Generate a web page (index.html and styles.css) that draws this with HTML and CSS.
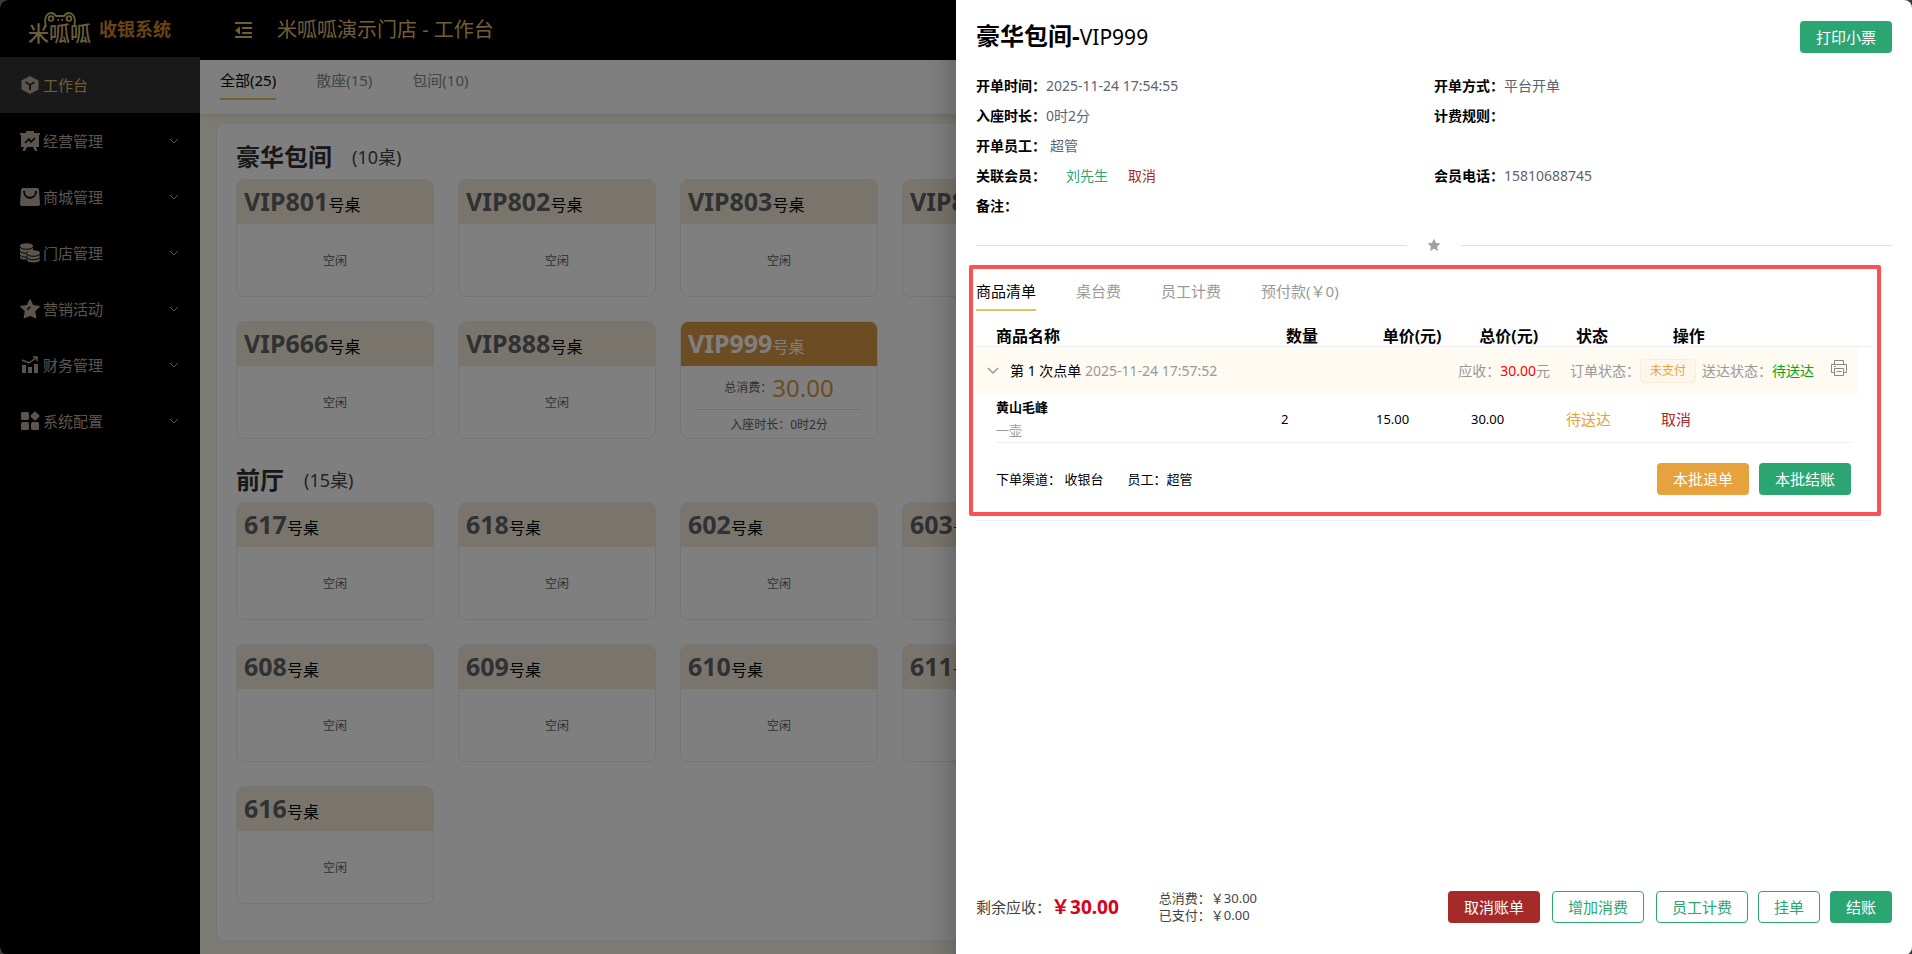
FILE: index.html
```html
<!DOCTYPE html>
<html lang="zh-CN">
<head>
<meta charset="utf-8">
<title>米呱呱收银系统</title>
<link rel="stylesheet" href="styles.css">
</head>
<body>
<div class="app">
  <aside class="sidebar">
    <div class="brand">
      <span class="brand-logo">
        <svg class="frog" viewBox="0 0 32 14" width="32" height="14" fill="none" stroke="currentColor" stroke-width="1.800"><path d="M1.500 14v-2C0 4 4 1 7 1c3 0 4 1.500 5 3h8c1-1.500 2-3 5-3 3 0 7 3 5.500 11v2"/><circle cx="7" cy="6.500" r="2.400"/><circle cx="25" cy="6.500" r="2.400"/><path d="M13.500 8H15M17.500 8H19"/></svg>
        <span class="brand-word">米呱呱</span>
      </span>
      <span class="brand-name">收银系统</span>
    </div>
    <nav class="menu">
      <a class="menu-item active" href="#"><svg viewBox="0 0 20 20" width="20" height="20"><path fill="currentColor" d="M10 1l8.500 4.500v9L10 19l-8.500-4.500v-9z"/><path d="M5.500 7l4.500 3 4.500-3M10 10v5" fill="none" stroke="#333" stroke-width="2"/></svg><span>工作台</span></a>
      <a class="menu-item" href="#"><svg viewBox="0 0 20 20" width="20" height="20"><path fill="currentColor" d="M6 0h8v2h6v2h-1v12H1V4H0V2h6zM4 16h3l-2 4H2.500zM13 16h3l1.500 4H15z"/><path d="M5 12l4-4 2 3 4-4" fill="none" stroke="#000" stroke-width="1.600"/></svg><span>经营管理</span><svg class="chev" viewBox="0 0 10 6" width="10" height="6"><path d="M1 1l4 4 4-4"/></svg></a>
      <a class="menu-item" href="#"><svg viewBox="0 0 20 20" width="20" height="20"><path fill="currentColor" d="M3 1h14q2 0 2 2l1 14q0 2-2 2H2q-2 0-2-2L1 3q0-2 2-2z"/><path d="M4 4c0 9 12 9 12 0" fill="none" stroke="#000" stroke-width="1.800"/></svg><span>商城管理</span><svg class="chev" viewBox="0 0 10 6" width="10" height="6"><path d="M1 1l4 4 4-4"/></svg></a>
      <a class="menu-item" href="#"><svg viewBox="0 0 20 20" width="20" height="20"><path fill="currentColor" d="M0 3v11c0 3 7 3 7 2V8h6V3z"/><ellipse cx="6.500" cy="3" rx="6.500" ry="2.700" fill="currentColor"/><path d="M0 4c1 3 12 3 13 0M0 8c1 2 4 2.500 7 2M0 12c1 2 4 2.500 7 2" fill="none" stroke="#000"/><path fill="currentColor" stroke="#000" stroke-width=".6" d="M7 10v7.500c0 3 13 3 13 0V10z"/><ellipse cx="13.500" cy="10" rx="6.500" ry="2.700" fill="currentColor"/><path d="M7 11c1 3 12 3 13 0M7 14.500c1 3 12 3 13 0" fill="none" stroke="#000"/></svg><span>门店管理</span><svg class="chev" viewBox="0 0 10 6" width="10" height="6"><path d="M1 1l4 4 4-4"/></svg></a>
      <a class="menu-item" href="#"><svg viewBox="0 0 20 20" width="20" height="20"><path fill="currentColor" stroke="currentColor" stroke-width="1.500" stroke-linejoin="round" d="M10 1l2.700 5.800 6.300.8-4.600 4.300 1.200 6.600L10 16l-5.600 2.500 1.200-6.600L1 7.600l6.300-.8z"/><path d="M7.500 11q.5-2.500 3-3" fill="none" stroke="#000" stroke-width="1.300"/></svg><span>营销活动</span><svg class="chev" viewBox="0 0 10 6" width="10" height="6"><path d="M1 1l4 4 4-4"/></svg></a>
      <a class="menu-item" href="#"><svg viewBox="0 0 20 20" width="20" height="20"><path fill="currentColor" d="M2 10h4v8H2zM8 12h4v6H8zM14 9h4v9h-4z"/><path d="M2 5l7 3 7-5M13 2h4v4" fill="none" stroke="currentColor" stroke-width="1.500"/></svg><span>财务管理</span><svg class="chev" viewBox="0 0 10 6" width="10" height="6"><path d="M1 1l4 4 4-4"/></svg></a>
      <a class="menu-item" href="#"><svg viewBox="0 0 20 20" width="20" height="20" fill="currentColor"><rect x="1" y="1" width="8" height="8" rx="1.500"/><rect x="1" y="11" width="8" height="8" rx="1.500"/><rect x="11" y="11" width="8" height="8" rx="1.500"/><rect x="11.500" y="1.500" width="7" height="7" rx="1" transform="rotate(45 15 5)"/></svg><span>系统配置</span><svg class="chev" viewBox="0 0 10 6" width="10" height="6"><path d="M1 1l4 4 4-4"/></svg></a>
    </nav>
  </aside>

  <div class="page">
    <header class="topbar">
      <svg viewBox="0 0 18 18" width="18" height="18" fill="currentColor"><path d="M0 1h17v2H0zM7 6h10v2H7zM7 11h10v2H7zM0 15h17v2H0zM5 5.500v8L0 9.500z"/></svg>
      <h1>米呱呱演示门店 - 工作台</h1>
    </header>
    <nav class="area-tabs">
      <a class="tab on" href="#">全部(25)</a>
      <a class="tab" href="#">散座(15)</a>
      <a class="tab" href="#">包间(10)</a>
    </nav>
    <main class="board">
      <section>
        <div class="area-title"><h2>豪华包间</h2><span>(10桌)</span></div>
        <div class="tables">
          <article class="seat"><header><b>VIP801</b>号桌</header><p>空闲</p></article>
          <article class="seat"><header><b>VIP802</b>号桌</header><p>空闲</p></article>
          <article class="seat"><header><b>VIP803</b>号桌</header><p>空闲</p></article>
          <article class="seat"><header><b>VIP804</b>号桌</header><p>空闲</p></article>
          <article class="seat"><header><b>VIP805</b>号桌</header><p>空闲</p></article>
          <article class="seat"><header><b>VIP806</b>号桌</header><p>空闲</p></article>
          <article class="seat"><header><b>VIP807</b>号桌</header><p>空闲</p></article>
          <article class="seat"><header><b>VIP666</b>号桌</header><p>空闲</p></article>
          <article class="seat"><header><b>VIP888</b>号桌</header><p>空闲</p></article>
          <article class="seat busy"><header><b>VIP999</b>号桌</header><div class="spend">总消费：<strong>30.00</strong></div><div class="stay">入座时长：0时2分</div></article>
        </div>
      </section>
      <section>
        <div class="area-title"><h2>前厅</h2><span>(15桌)</span></div>
        <div class="tables">
          <article class="seat"><header><b>617</b>号桌</header><p>空闲</p></article>
          <article class="seat"><header><b>618</b>号桌</header><p>空闲</p></article>
          <article class="seat"><header><b>602</b>号桌</header><p>空闲</p></article>
          <article class="seat"><header><b>603</b>号桌</header><p>空闲</p></article>
          <article class="seat"><header><b>605</b>号桌</header><p>空闲</p></article>
          <article class="seat"><header><b>606</b>号桌</header><p>空闲</p></article>
          <article class="seat"><header><b>607</b>号桌</header><p>空闲</p></article>
          <article class="seat"><header><b>608</b>号桌</header><p>空闲</p></article>
          <article class="seat"><header><b>609</b>号桌</header><p>空闲</p></article>
          <article class="seat"><header><b>610</b>号桌</header><p>空闲</p></article>
          <article class="seat"><header><b>611</b>号桌</header><p>空闲</p></article>
          <article class="seat"><header><b>612</b>号桌</header><p>空闲</p></article>
          <article class="seat"><header><b>613</b>号桌</header><p>空闲</p></article>
          <article class="seat"><header><b>615</b>号桌</header><p>空闲</p></article>
          <article class="seat"><header><b>616</b>号桌</header><p>空闲</p></article>
        </div>
      </section>
    </main>
  </div>

  <div class="mask">
    <div class="drawer" role="dialog" aria-label="豪华包间-VIP999">
      <header class="drawer-head">
        <h2>豪华包间-<span>VIP999</span></h2>
        <button class="btn green" type="button">打印小票</button>
      </header>
      <dl class="info">
        <div><dt>开单时间：</dt><dd>2025-11-24 17:54:55</dd></div>
        <div><dt>开单方式：</dt><dd>平台开单</dd></div>
        <div><dt>入座时长：</dt><dd>0时2分</dd></div>
        <div><dt>计费规则：</dt><dd></dd></div>
        <div class="wide"><dt>开单员工：</dt><dd class="staff">超管</dd></div>
        <div><dt>关联会员：</dt><dd class="member"><a class="link" href="#">刘先生</a><a class="danger" href="#">取消</a></dd></div>
        <div><dt>会员电话：</dt><dd>15810688745</dd></div>
        <div class="wide"><dt>备注：</dt><dd></dd></div>
      </dl>
      <div class="divider"><svg viewBox="0 0 14 14" width="14" height="14"><path fill="#a0a0a0" d="M7 .8l1.900 4 4.400.6-3.200 3.100.8 4.400L7 10.800l-3.900 2.100.8-4.400L.7 5.400l4.400-.6z"/></svg></div>

      <section class="orders">
        <span class="frame"></span>
        <nav class="order-tabs">
          <a class="tab on" href="#">商品清单</a>
          <a class="tab" href="#">桌台费</a>
          <a class="tab" href="#">员工计费</a>
          <a class="tab" href="#">预付款(￥0)</a>
        </nav>
        <table class="goods">
          <thead><tr><th>商品名称</th><th>数量</th><th>单价(元)</th><th>总价(元)</th><th>状态</th><th>操作</th></tr></thead>
          <tbody>
            <tr class="batch"><td colspan="6">
              <svg class="fold" viewBox="0 0 12 8" width="12" height="8"><path d="M1 1l5 5 5-5"/></svg>
              <span class="batch-name">第 1 次点单 <time>2025-11-24 17:57:52</time></span>
              <span class="due">应收：<em>30.00</em>元</span>
              <span class="pay">订单状态：</span><span class="tag">未支付</span>
              <span class="send">送达状态：<em>待送达</em></span>
              <button class="print" type="button" aria-label="打印"><svg viewBox="0 0 16 16" width="16" height="16" fill="none" stroke="#888"><path d="M3.500 4.500v-4h9v4M3.500 12.500h-3v-8h15v8h-3"/><path d="M3.500 8.500h9v7h-9zM5.500 11.500h5M3 6.500h2"/></svg></button>
            </td></tr>
            <tr class="item"><td><b>黄山毛峰</b><small>一壶</small></td><td>2</td><td>15.00</td><td>30.00</td><td class="wait">待送达</td><td><a class="danger" href="#">取消</a></td></tr>
          </tbody>
        </table>
        <div class="batch-foot">
          <span>下单渠道： 收银台</span><span>员工：超管</span>
          <button class="btn orange" type="button">本批退单</button>
          <button class="btn green" type="button">本批结账</button>
        </div>
      </section>

      <footer class="drawer-foot">
        <span class="left-due">剩余应收：</span><strong>￥30.00</strong>
        <div class="sums"><span>总消费：￥30.00</span><span>已支付：￥0.00</span></div>
        <div class="actions">
          <div class="group">
            <button class="btn red" type="button">取消账单</button>
            <button class="btn line" type="button">增加消费</button>
            <button class="btn line" type="button">员工计费</button>
          </div>
          <button class="btn line" type="button">挂单</button>
          <button class="btn green" type="button">结账</button>
        </div>
      </footer>
    </div>
  </div>
</div>
</body>
</html>
```

FILE: styles.css
```css
* { box-sizing: border-box; }
body {
  margin: 0;
  background: #3a3a3c;
  color: #000;
  font: 14px/20px "Noto Sans", "Noto Sans CJK SC", sans-serif;
}
h1, h2, p, dl, dd { margin: 0; }
a { color: inherit; text-decoration: none; }
em { font-style: normal; }
button { font: inherit; cursor: pointer; }

.app {
  position: relative;
  display: flex;
  min-height: 100vh;
  border-radius: 8px;
  overflow: hidden;
  background: #f7f5e8;
}

/* sidebar */
.sidebar { width: 200px; flex: none; background: #000; }
.brand {
  display: flex;
  align-items: center;
  gap: 8px;
  height: 57px;
  padding-left: 28px;
}
.brand-logo { position: relative; color: #d8bc78; }
.frog { position: absolute; left: 16px; top: -1px; }
.brand-word { display: block; padding-top: 8px; font-size: 21px; font-weight: 500; line-height: 24px; }
.brand-name { color: #d48a26; font-size: 18px; font-weight: 700; line-height: 24px; }
.menu-item {
  display: flex;
  align-items: center;
  gap: 3px;
  height: 56px;
  padding: 0 21px 0 20px;
  color: #b9aa9a;
  font-size: 15px;
}
.menu-item.active { background: #333; }
.menu-item.active span { color: #e3bd6c; }
.chev { margin-left: auto; fill: none; stroke: currentColor; }

/* page */
.page { flex: 1; min-width: 0; display: flex; flex-direction: column; }
.topbar {
  display: flex;
  align-items: center;
  gap: 24px;
  height: 60px;
  padding: 0 35px;
  background: #000;
  color: #e3bd6c;
}
.topbar h1 { font-size: 20px; font-weight: 400; line-height: 28px; }
.area-tabs, .order-tabs { display: flex; gap: 40px; font-size: 15px; line-height: 24px; }
.tab { color: #999; padding-bottom: 6px; border-bottom: 2px solid transparent; }
.area-tabs {
  height: 54px;
  padding: 8px 20px 14px;
  background: #fff;
  box-shadow: 0 2px 8px rgba(0, 0, 0, .1);
}
.area-tabs .tab { color: #888; }
.tab.on, .area-tabs .tab.on { color: #000; border-color: #e6be64; }

.board {
  flex: 1;
  margin: 9px 16px 14px;
  padding: 10px 19px 36px;
  border: 1px solid #ebebeb;
  border-radius: 8px;
  background: #fff;
}
.board section + section { margin-top: 18px; }
.area-title { display: flex; align-items: center; gap: 20px; height: 45px; }
.area-title h2 { font-size: 24px; line-height: 32px; color: #303133; }
.area-title span { font-size: 18px; color: #444; }
.tables { display: grid; grid-template-columns: repeat(auto-fill, 198px); gap: 24px; }
.seat {
  height: 118px;
  border: 1px solid #ebebeb;
  border-radius: 8px;
  overflow: hidden;
  color: #606266;
  font-size: 12px;
  text-align: center;
}
.seat header {
  display: flex;
  align-items: baseline;
  height: 44px;
  padding: 5px 7px;
  background: #f5ebd8;
  color: #000;
  font-size: 16px;
  line-height: 32px;
}
.seat b { color: #606266; font-size: 25px; }
.seat p { line-height: 74px; }
.busy header { background: #d99846; color: #fff; }
.busy header b { color: #fff; }
.spend {
  display: flex;
  align-items: center;
  justify-content: center;
  height: 44px;
  margin: 0 15px;
  border-bottom: 1px solid #e4e4e4;
}
.spend strong { color: #d99846; font-size: 24px; font-weight: 400; }
.stay { line-height: 30px; }

/* drawer */
.mask { position: absolute; inset: 0; background: rgba(0, 0, 0, .5); }
.drawer {
  display: flex;
  flex-direction: column;
  width: 50%;
  height: 100%;
  margin-left: auto;
  padding: 20px 20px 31px;
  background: #fff;
  box-shadow: 0 16px 24px 2px rgba(0, 0, 0, .14), 0 6px 30px 5px rgba(0, 0, 0, .12);
}
.drawer-head { display: flex; align-items: center; justify-content: space-between; margin-bottom: 18px; }
.drawer-head h2 { font-size: 24px; line-height: 32px; }
.drawer-head h2 span { font-size: 21px; font-weight: 400; }
.btn {
  height: 32px;
  padding: 0 15px;
  border: 1px solid transparent;
  border-radius: 4px;
  color: #fff;
  font-size: 15px;
  line-height: 28px;
}
.green { background: #2ba673; }
.orange { background: #e6a23c; }
.red { background: #a52a2a; }
.line { background: #fff; border-color: #2ba673; color: #2ba673; }

.info { display: grid; grid-template-columns: 1fr 1fr; line-height: 30px; }
.info > div { display: flex; }
.wide { grid-column: 1 / -1; }
.info dt { font-weight: 700; }
.info dd { color: #5b6370; }
.info .staff { padding-left: 4px; }
.member { display: flex; gap: 20px; padding-left: 20px; }
.info .link { color: #2ba673; }
.danger, .info .danger { color: #a52a2a; }
.divider { display: flex; align-items: center; gap: 20px; height: 18px; margin-top: 15px; }
.divider::before, .divider::after { content: ""; flex: 1; height: 1px; background: #dcdfe6; }

.orders { position: relative; margin-top: 25px; }
.frame {
  position: absolute;
  inset: -14px 11px 5px -7px;
  border: 4px solid #fa5151;
  border-radius: 2px;
  pointer-events: none;
}
.goods { display: block; margin: 15px 21px 0 0; }
.goods thead, .goods tbody { display: block; }
.goods tr { display: grid; grid-template-columns: 3fr 1fr 1fr 1fr 1fr 2fr; }
.goods th, .goods td { padding: 0; text-align: left; }
.goods thead tr { padding: 0 5px 0 20px; border-bottom: 1px solid #ebeef5; }
.goods th { font-size: 16px; line-height: 20px; }
.goods .batch { display: block; margin-right: 13px; background: #fffaf2; }
.batch td { display: flex; align-items: center; height: 48px; padding: 0 11px; color: #999; }
.fold { margin-right: 11px; fill: none; stroke: #999; stroke-width: 1.5; }
.batch-name { color: #000; }
.batch-name time { color: #999; }
.due { margin-left: auto; }
.due em { color: #f00; }
.pay { margin-left: 20px; }
.tag {
  margin-right: 6px;
  padding: 0 9px;
  border: 1px solid #faecd8;
  border-radius: 4px;
  background: #fdf6ec;
  color: #e6a23c;
  font-size: 12px;
  line-height: 22px;
}
.send em { color: #00a814; }
.print { display: flex; margin: 0 0 6px 17px; padding: 0; border: 0; background: none; }
.goods .item { align-items: center; margin: 0 20px; padding-top: 1px; border-bottom: 1px solid #ebeef5; font-size: 13px; }
.item b, .item small { display: block; font-size: 13px; line-height: 23px; }
.item small { color: #999; }
.item .wait { color: #e6a23c; font-size: 15px; }
.item .danger { font-size: 15px; }
.batch-foot {
  display: flex;
  align-items: center;
  gap: 10px;
  margin-right: 21px;
  padding: 20px 20px 25px;
  border-bottom: 1px solid #ebeef5;
  font-size: 13px;
}
.batch-foot span { margin-right: 14px; }
.batch-foot .orange { margin-left: auto; }

.drawer-foot { display: flex; align-items: center; margin-top: auto; color: #444; font-size: 15px; }
.drawer-foot strong { margin-right: 40px; color: #d9001b; font-size: 19px; }
.sums { display: grid; font-size: 13px; line-height: 17px; }
.actions { display: flex; gap: 10px; margin-left: auto; }
.group { display: flex; gap: 12px; }
```
